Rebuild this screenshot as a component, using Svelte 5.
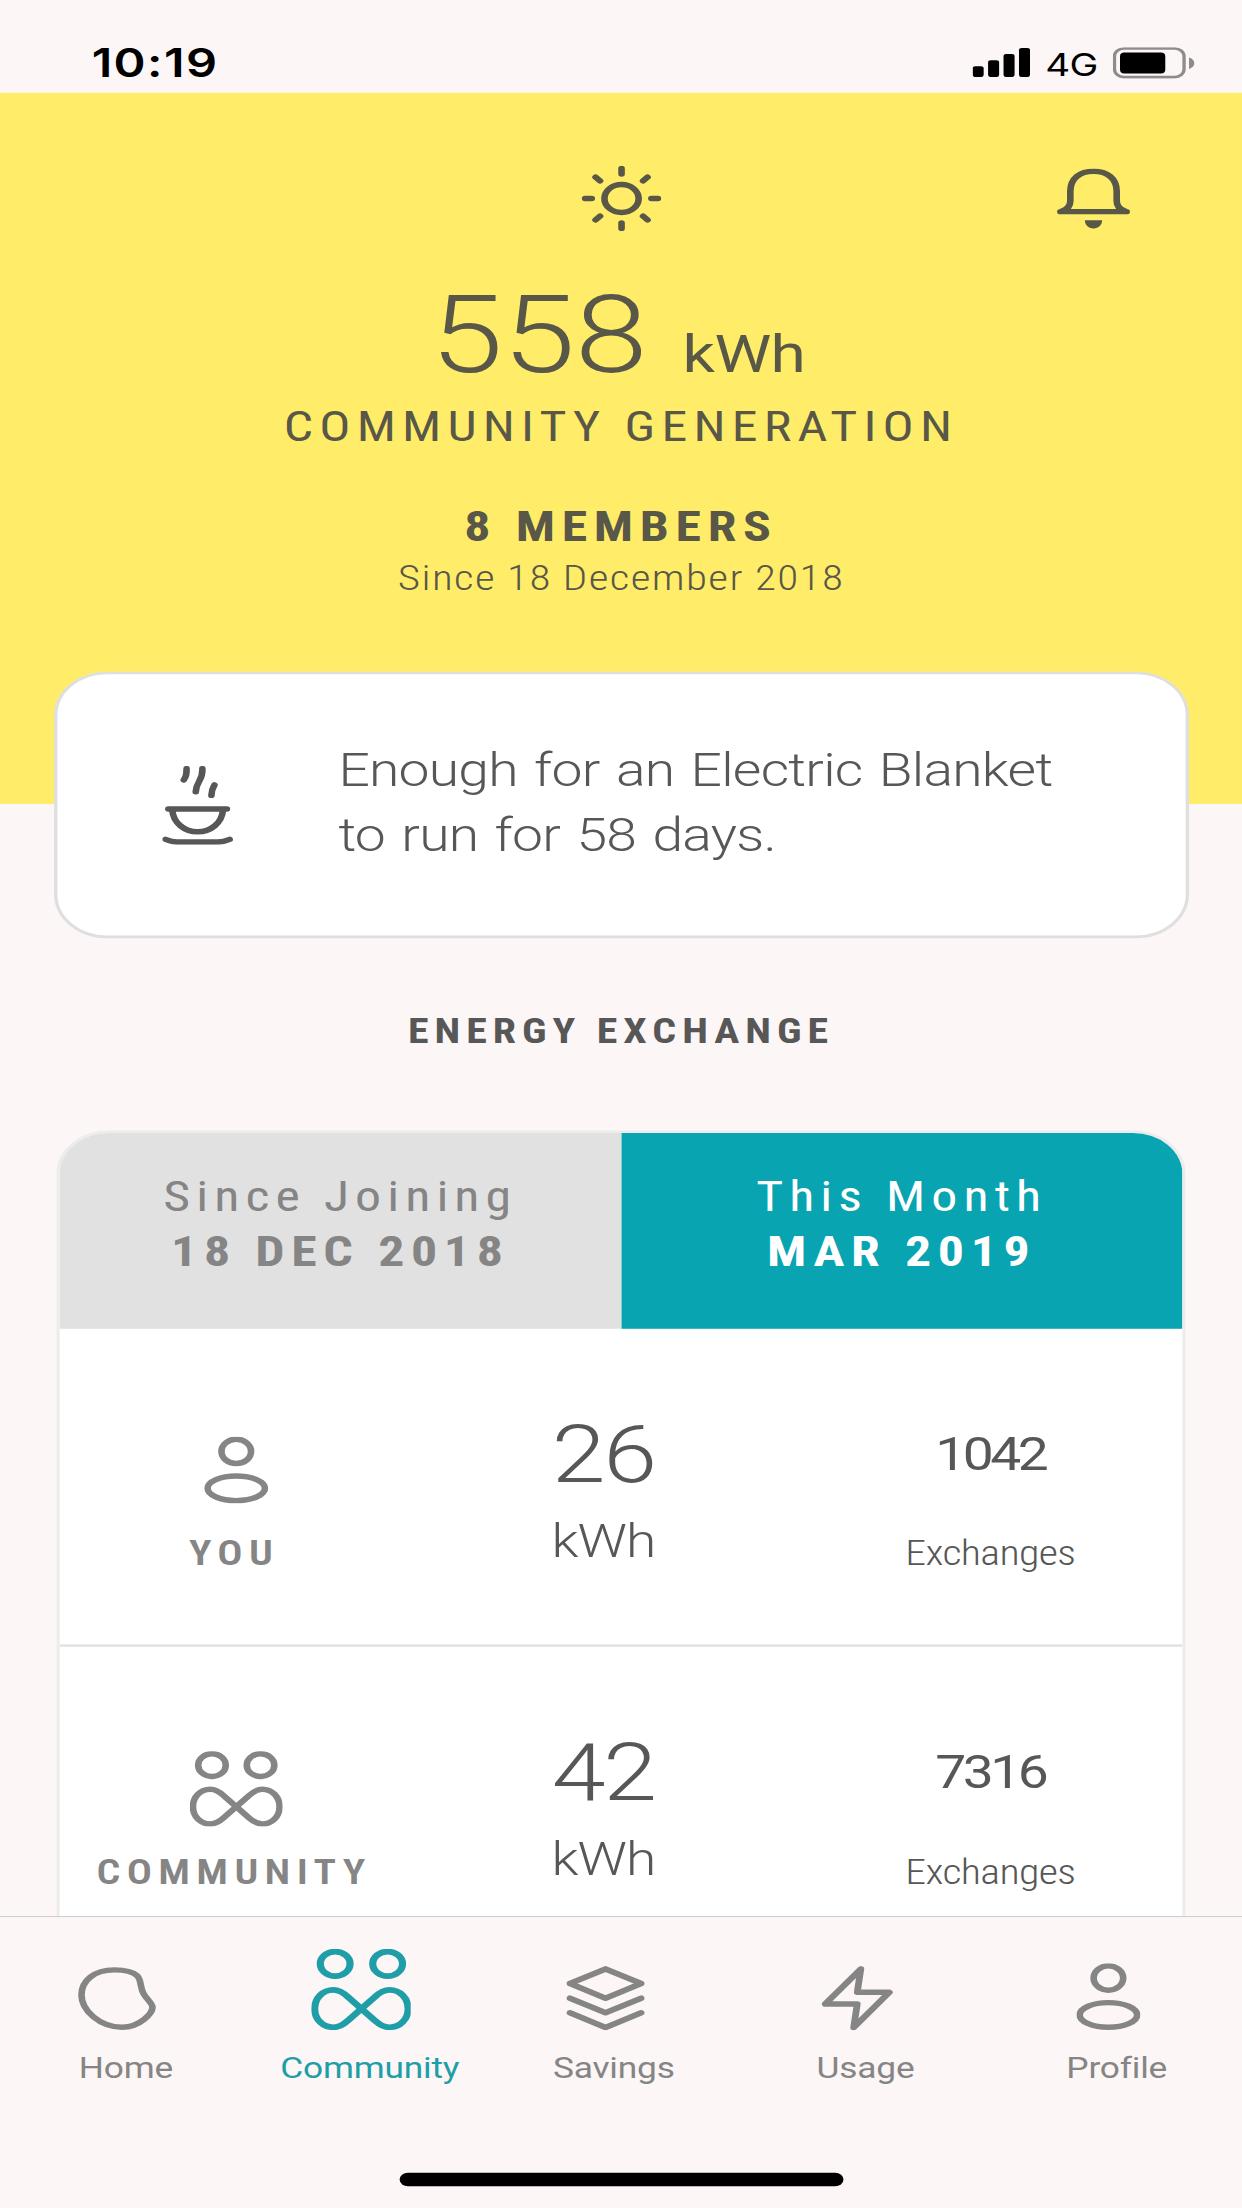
<script lang="ts">
  const exchange = [
    { icon: "person", label: "You", energy: 26, exchanges: 1042 },
    { icon: "community", label: "Community", energy: 42, exchanges: 7316 },
  ];

  const tabs = [
    { icon: "home", label: "Home" },
    { icon: "community", label: "Community" },
    { icon: "savings", label: "Savings" },
    { icon: "usage", label: "Usage" },
    { icon: "person", label: "Profile" },
  ];

  let period = $state("month");
  let active = $state("Community");
</script>

{#snippet icon(name: string, scale: number)}
  {#if name === "person"}
    <svg width="58" height="74" viewBox="0 0 58 74">
      <circle cx="29" cy="16.3" r="13.4" />
      <ellipse cx="29" cy="57" rx="26" ry="13.6" />
    </svg>
  {:else if name === "community"}
    <svg width={84 * scale} height={83 * scale} viewBox="0 0 84 83">
      <circle cx="20" cy="15.4" r="12.5" />
      <circle cx="64" cy="15.4" r="12.5" />
      <path
        d="M42 61.2 31 49.5C27 45 23 42 18.5 42 9.5 42 2.8 50.5 2.8 61.2s6.7 19.1 15.7 19.1C23 80.3 27 77.4 31 73l22-23.5c4-4.5 8-7.5 12.5-7.5 9 0 15.7 8.5 15.7 19.2s-6.7 19.1-15.7 19.1c-4.5 0-8.5-2.9-12.5-7.3z"
      />
    </svg>
  {:else if name === "home"}
    <svg width="72" height="70" viewBox="0 0 71 70">
      <path
        d="M33 3.3C42 3.3 50 5.5 53.5 9.5 58 14.5 56 22 59.5 29.5 62.5 36 67.6 40 67.6 44.5 67.6 50.5 57 66.5 40 66.5 20 66.5 3.3 48 3.3 31 3.3 15 15 3.3 33 3.3z"
      />
    </svg>
  {:else if name === "savings"}
    <svg width="71" height="71" viewBox="1 1 22 22" stroke-width="1.9">
      <path d="M12 2 2 7l10 5 10-5z" />
      <path d="m2 12 10 5 10-5" />
      <path d="m2 17 10 5 10-5" />
    </svg>
  {:else if name === "usage"}
    <svg width="65" height="71" viewBox="2 1 20 22" stroke-width="1.9">
      <path d="M13 2 3 14h9l-1 8 10-12h-9z" />
    </svg>
  {/if}
{/snippet}

<div class="viewport">
  <div class="screen">
    <div class="status">
      <span class="time">10:19</span>
      <div class="indicators">
        <svg class="solid" width="52" height="32" viewBox="0 0 52 32">
          <rect x="0" y="20" width="10" height="12" rx="2.5" />
          <rect x="14" y="13.5" width="10" height="18.5" rx="2.5" />
          <rect x="28" y="6.5" width="10" height="25.5" rx="2.5" />
          <rect x="42" y="0" width="10" height="32" rx="2.5" />
        </svg>
        <span class="network">4G</span>
        <svg class="solid battery" width="74" height="35" viewBox="0 0 74 35">
          <rect class="shell" x="1.5" y="1.5" width="63" height="31.5" rx="8.5" />
          <rect x="6.5" y="6" width="41" height="23" rx="4" />
          <path class="nub" d="M69 11.5c6.5 2.5 6.5 10 0 12.5z" />
        </svg>
      </div>
    </div>

    <main>
      <header>
        <div class="toolbar">
          <svg class="sun" width="72" height="72" viewBox="0 0 72 72">
            <circle cx="36" cy="36" r="15.5" />
            <path
              d="M36 3v6M36 63v6M3 36h6M63 36h6M12.5 12.5l4 4M55.5 55.5l4 4M12.5 59.5l4-4M55.5 16.5l4-4"
            />
          </svg>
          <svg class="bell" width="67" height="67" viewBox="0 0 67 67">
            <path
              d="M3.5 47.5h60M5.5 46.5c5-2 7-5.5 7-11V25C12.5 11 21 3 33.5 3s21 8 21 22v10.5c0 5.5 2 9 7 11"
            />
            <path class="clapper" d="M25.7 57h15.6c0 5-3 9-7.8 9s-7.8-4-7.8-9z" />
          </svg>
        </div>
        <p class="reading">558 <small>kWh</small></p>
        <p class="title">COMMUNITY GENERATION</p>
        <p class="members">8 MEMBERS</p>
        <p class="since">Since 18 December 2018</p>
      </header>

      <section class="card">
        <svg width="64" height="87" viewBox="0 0 64 87">
          <path d="M22 3c0 7-.5 8-2.5 12.5M36.3 3c.5 14-5 12-6 25.5M47.2 21c-2 4-2.5 6-2.7 11.5" />
          <path d="M5.5 47.5h53M9 48.5c1 14.5 11 24.2 23 24.2s22-9.7 23-24.2" />
          <path d="M3 81c4 2 6.5 3 10.5 3h37c4 0 6.5-1 10.5-3" />
        </svg>
        <p>Enough for an Electric Blanket<br />to run for 58 days.</p>
      </section>

      <h2>ENERGY EXCHANGE</h2>

      <section class="panel">
        <div class="periods">
          <button class:selected={period === "joining"} onclick={() => (period = "joining")}>
            <span>Since Joining</span>
            <b>18 DEC 2018</b>
          </button>
          <button class:selected={period === "month"} onclick={() => (period = "month")}>
            <span>This Month</span>
            <b>MAR 2019</b>
          </button>
        </div>
        {#each exchange as row}
          <div class="row">
            <div class="who">
              <div class="figure">{@render icon(row.icon, 1)}</div>
              <span>{row.label.toUpperCase()}</span>
            </div>
            <div class="energy">
              <strong>{row.energy}</strong>
              <span>kWh</span>
            </div>
            <div class="count">
              <strong>{row.exchanges}</strong>
              <span>Exchanges</span>
            </div>
          </div>
        {/each}
      </section>
    </main>

    <nav>
      <div class="tabs">
        {#each tabs as tab}
          <button class:active={active === tab.label} onclick={() => (active = tab.label)}>
            <span class="glyph">{@render icon(tab.icon, 1.08)}</span>
            <span class="name">{tab.label}</span>
          </button>
        {/each}
      </div>
      <div class="home-bar"></div>
    </nav>
  </div>
</div>

<style>
  :global(body) {
    background: #fcf6f6;
  }

  .viewport {
    width: 1242px;
    height: 2208px;
    overflow: hidden;
  }

  /* laid out at 1125 x 2436, then fitted to the viewport */
  .screen {
    display: flex;
    flex-direction: column;
    width: 1125px;
    height: 2436px;
    background: #fcf6f6;
    transform: scale(1.104, 0.90640394);
    transform-origin: 0 0;

    font-family: Roboto, "Open Sans", sans-serif;
    font-stretch: 85%;
    color: #575757;
  }

  p,
  h2 {
    margin: 0;
  }

  button {
    padding: 0;
    border: none;
    background: none;
    font: inherit;
    font-stretch: inherit;
    color: inherit;
  }

  svg {
    flex: none;
    display: block;
    fill: none;
    stroke: currentColor;
    stroke-linecap: round;
    stroke-linejoin: round;
  }

  svg:not([stroke-width]) {
    stroke-width: 6px;
  }

  .status {
    display: flex;
    justify-content: space-between;
    align-items: flex-end;
    flex: none;
    height: 102px;
    padding: 0 43px 14px 83px;
    box-sizing: border-box;
    border-bottom: 3px solid #fbf9f5;

    font-family: Inter, sans-serif;
    color: #000;
  }

  .time {
    font-size: 44px;
    line-height: 32px;
    font-weight: 600;
    letter-spacing: 1.3px;
  }

  .indicators {
    display: flex;
    align-items: flex-end;
    gap: 14px;
  }

  .network {
    font-size: 35px;
    line-height: 28px;
    letter-spacing: -0.8px;
  }

  .battery {
    margin-bottom: -2px;
  }

  .solid {
    fill: #000;
    stroke: none;
  }

  .shell {
    fill: none;
    stroke: #8f8b8b;
    stroke-width: 3px;
  }

  .nub {
    fill: #8f8b8b;
  }

  main {
    flex: 1;
    min-height: 0;
    overflow: hidden;
  }

  header {
    height: 785px;
    padding-top: 81px;
    box-sizing: border-box;
    background: #ffed69;
    text-align: center;
    color: #595748;
  }

  .toolbar {
    display: grid;
    grid-template-columns: 1fr 72px 1fr;
    align-items: center;
    height: 72px;
    padding: 0 101px;
  }

  .sun {
    grid-column: 2;
  }

  .bell {
    justify-self: end;
  }

  .clapper {
    fill: currentColor;
    stroke: none;
  }

  .reading {
    height: 120px;
    margin-top: 55px;
    padding-right: 6px;
    font-size: 119px;
    line-height: 120px;
    font-weight: 300;
    font-stretch: 100%;
    letter-spacing: -0.6px;
  }

  .reading small {
    margin-left: 4px;
    font-size: 58px;
    line-height: 1;
    font-weight: 400;
  }

  .title {
    margin-top: 12px;
    font-size: 47px;
    line-height: 56px;
    letter-spacing: 5.6px;
  }

  .members {
    margin-top: 55px;
    font-size: 47px;
    line-height: 56px;
    font-weight: 700;
    letter-spacing: 6px;
  }

  .since {
    margin-top: 5px;
    font-size: 39px;
    line-height: 48px;
    font-weight: 300;
    letter-spacing: 1.25px;
  }

  .card {
    position: relative;
    display: flex;
    align-items: center;
    gap: 96px;
    width: 1028px;
    height: 294px;
    margin: -146px auto 0;
    padding-left: 95px;
    box-sizing: border-box;
    border: 3px solid #e0dfdf;
    border-radius: 48px;
    background: #fff;
  }

  .card p {
    margin-bottom: 5px;
    font-size: 50px;
    line-height: 72px;
    font-weight: 300;
    font-stretch: 100%;
    letter-spacing: -0.7px;
    word-spacing: 3.3px;
    white-space: nowrap;
  }

  h2 {
    margin: 81px 0 87px;
    font-size: 38px;
    line-height: 44px;
    font-weight: 700;
    letter-spacing: 5.4px;
    text-align: center;
  }

  .panel {
    width: 1023px;
    margin: 0 auto;
    box-sizing: border-box;
    border: 3px solid #ececec;
    border-bottom: none;
    border-radius: 48px 48px 0 0;
    background: #fff;
    overflow: hidden;
  }

  .periods {
    display: grid;
    grid-template-columns: 1fr 1fr;
    height: 216px;
  }

  .periods button {
    display: flex;
    flex-direction: column;
    align-items: center;
    gap: 5px;
    padding-top: 42px;
    background: #e2e1e2;

    font-size: 47px;
    line-height: 56px;
    letter-spacing: 5.5px;
    color: #858585;
  }

  .periods b {
    letter-spacing: 6px;
  }

  .periods button.selected {
    background: #08a4b1;
    color: #fff;
  }

  .row {
    display: grid;
    grid-template-columns: 316px 353px 348px;
    height: 351px;
    box-sizing: border-box;
    border-bottom: 3px solid #e4e4e4;
  }

  .row > div {
    display: flex;
    flex-direction: column;
    align-items: center;
  }

  .who {
    padding-top: 114px;
    color: #858585;
  }

  .figure {
    display: flex;
    align-items: center;
    height: 84px;
    margin-left: 3px;
  }

  .who span {
    margin-top: 28px;
    font-size: 38px;
    line-height: 44px;
    font-weight: 600;
    letter-spacing: 5.7px;
  }

  .energy {
    padding-top: 94px;
    font-stretch: 100%;
  }

  .energy strong {
    font-size: 88px;
    line-height: 90px;
    font-weight: 300;
    letter-spacing: -2px;
  }

  .energy span {
    margin-top: 21px;
    font-size: 50px;
    line-height: 60px;
    font-weight: 300;
    letter-spacing: -1px;
  }

  .count {
    padding-top: 109px;
  }

  .count strong {
    font-size: 50px;
    line-height: 60px;
    font-weight: 400;
    font-stretch: 100%;
    letter-spacing: -3.2px;
  }

  .count span {
    margin-top: 57px;
    font-size: 38px;
    line-height: 44px;
    font-weight: 300;
    letter-spacing: -0.6px;
  }

  nav {
    flex: none;
    height: 322px;
    box-sizing: border-box;
    border-top: 1.5px solid #c6c8c8;
    background: #fcf6f6;
  }

  .tabs {
    display: grid;
    grid-template-columns: 228px 214px 228px 228px 227px;
    padding-top: 34px;
  }

  .tabs button {
    display: flex;
    flex-direction: column;
    align-items: center;
    color: #858585;
  }

  .tabs button.active {
    color: #1f9ea8;
  }

  .glyph {
    display: flex;
    align-items: flex-end;
    height: 91px;
    margin-right: 16px;
  }

  .name {
    margin-top: 22px;
    font-size: 32px;
    line-height: 40px;
    font-stretch: 100%;
    letter-spacing: -0.2px;
  }

  .home-bar {
    width: 402px;
    height: 15px;
    margin: 95px auto 0;
    border-radius: 8px;
    background: #000;
  }
</style>
